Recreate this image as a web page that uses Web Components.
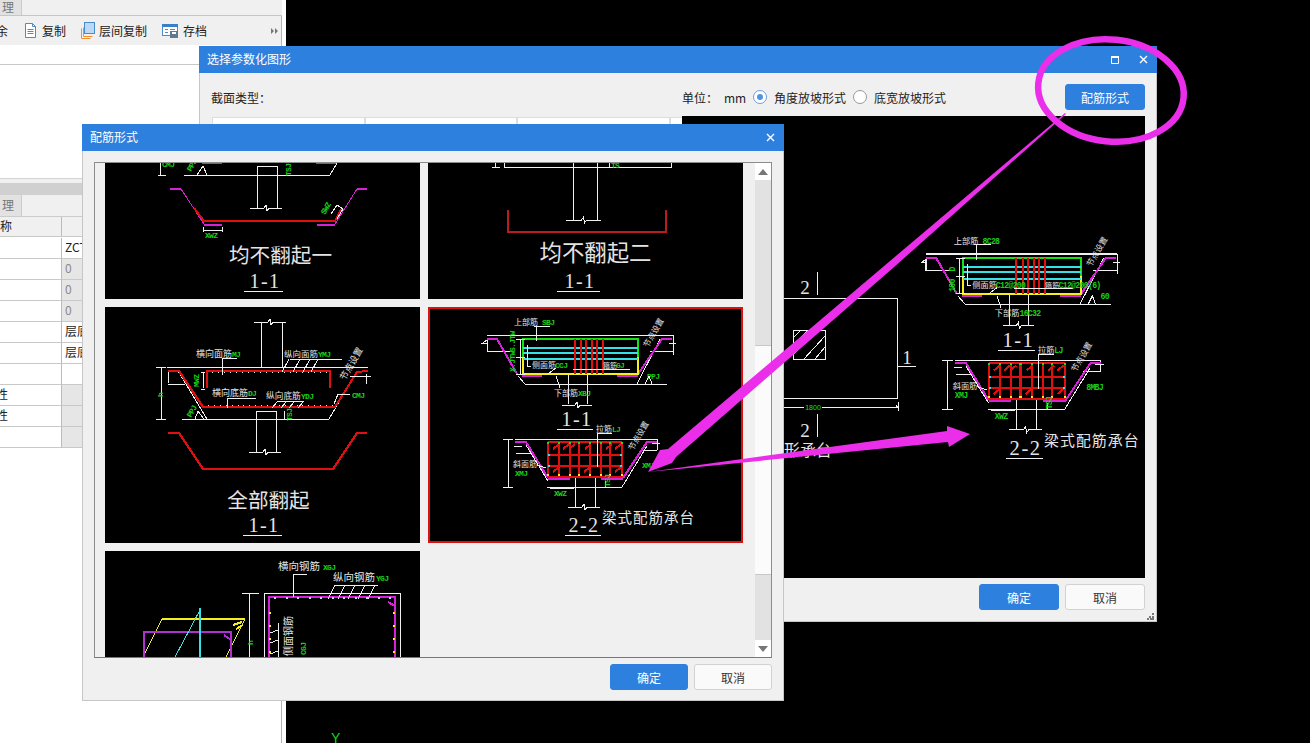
<!DOCTYPE html>
<html lang="zh-CN">
<head>
<meta charset="utf-8">
<title>配筋形式</title>
<style>
  html, body { margin: 0; background: #000; overflow: hidden; }
  body { font: 12px "Noto Sans CJK SC", "Noto Sans", sans-serif; }
</style>
</head>
<body>

<cad-desktop>
  <app-panel></app-panel>

  <app-window title="选择参数化图形" x="199" y="46" w="958" h="576" maximizable grip>
    <div style="display:flex;flex-direction:column;height:100%;padding:0 12px;box-sizing:border-box;color:#222">
      <div style="height:43px;display:flex;align-items:center;flex:none;padding-top:5px;box-sizing:border-box">
        <span style="width:471px;flex:none">截面类型：</span>
        <span style="width:42px;flex:none">单位：</span>
        <span style="width:29px;flex:none">mm</span>
        <ui-radio checked>角度放坡形式</ui-radio>
        <ui-radio>底宽放坡形式</ui-radio>
        <ui-button primary style="margin-left:auto;width:80px">配筋形式</ui-button>
      </div>
      <div style="flex:1;display:flex;min-height:0">
        <div style="width:471px;flex:none;display:flex;padding:1px 0 0 1px;box-sizing:border-box;height:20px">
          <i style="width:153px;height:30px;background:#fff;border:1px solid #ddd;box-sizing:border-box"></i>
          <i style="width:152px;height:30px;background:#fff;border:1px solid #ddd;box-sizing:border-box"></i>
          <i style="width:153px;height:30px;background:#fff;border:1px solid #ddd;box-sizing:border-box"></i>
          <i style="width:12px;height:30px;background:#fff;border:1px solid #ddd;border-right:0;box-sizing:border-box"></i>
        </div>
        <cad-thumb kind="view" style="width:463px;height:462px"></cad-thumb>
      </div>
      <div style="height:44px;display:flex;justify-content:flex-end;gap:6px;padding-top:6px;box-sizing:border-box;flex:none">
        <ui-button primary style="width:80px">确定</ui-button>
        <ui-button style="width:80px">取消</ui-button>
      </div>
    </div>
  </app-window>

  <app-window title="配筋形式" x="82" y="124" w="702" h="577">
    <div style="display:flex;flex-direction:column;height:100%;padding:11px 12px 0;box-sizing:border-box">
      <thumb-list>
        <cad-thumb kind="flat1"></cad-thumb>
        <cad-thumb kind="flat2"></cad-thumb>
        <cad-thumb kind="all"></cad-thumb>
        <cad-thumb kind="beam" selected></cad-thumb>
        <cad-thumb kind="wall"></cad-thumb>
      </thumb-list>
      <div style="height:43px;display:flex;justify-content:flex-end;gap:6px;padding-top:6px;box-sizing:border-box;flex:none">
        <ui-button primary>确定</ui-button>
        <ui-button>取消</ui-button>
      </div>
    </div>
  </app-window>

  <markup-overlay></markup-overlay>
</cad-desktop>

<script>
const RED = '#e01010', MAG = '#d422d4', WHITE = '#f0f0f0', LIME = '#14e014', CYAN = '#35e0e6', YEL = '#f4f020', TAG = '#18d018';
const PINK = '#ea2eea';
const CJK = '"Noto Sans CJK SC", sans-serif';

// svg helpers, coordinates are screen pixels of the reference
function line(pts, color = WHITE, w = 1) {
  return `<polyline points="${pts}" fill="none" stroke="${color}" stroke-width="${w}"/>`;
}
function text(x, y, s, opt = {}) {
  const { fill = '#e4e4e4', size = 8, rot = 0, anchor = 'start', font = CJK, spacing = 0, weight = 400 } = opt;
  const tf = rot ? ` transform="rotate(${rot} ${x} ${y})"` : '';
  return `<text x="${x}" y="${y}" fill="${fill}" font-size="${size}" font-family='${font}' font-weight="${weight}" text-anchor="${anchor}" letter-spacing="${spacing}"${tf}>${s}</text>`;
}
function tag(x, y, s, rot = 0) {
  return text(x, y, s, { fill: TAG, size: 8, rot, font: '"Liberation Mono", monospace', spacing: -0.7, weight: 700 });
}
function secTitle(cx, y, s, x1, x2) {
  return text(cx, y, s, { size: 20, anchor: 'middle', font: '"Liberation Serif", serif', spacing: 1.5 }) + line(`${x1},${y + 3} ${x2},${y + 3}`);
}
function breakLine(x1, x2, y) {
  const m = (x1 + x2) / 2;
  return line(`${x1},${y} ${m - 2},${y} ${m},${y - 3} ${m + 1},${y + 3} ${m + 3},${y} ${x2},${y}`);
}
function dots(list, color, r = 1) {
  return list.map(p => `<rect x="${p[0] - r}" y="${p[1] - r}" width="${2 * r}" height="${2 * r}" fill="${color}"/>`).join('');
}
function range(a, b, n) {
  return Array.from({ length: n }, (_, i) => Math.round(a + (b - a) * i / (n - 1)));
}

function flatOne() {
  return line('184,175 330,175') + line('257,175 257,166 277,166 277,175') + line('257,175 257,208') + line('277,175 277,208') +
    breakLine(250, 282, 208) + line('202,163 222,163', MAG, 2) + line('316,163 336,163', MAG, 2) +
    line('158,175 166,175') + line('160,163 160,175') +
    line('330,175 337,163') + line('197,175 203,166 207,175') +
    tag(162, 167, 'CMJ') + tag(191, 172, 'PPJ', -60) + tag(291, 176, 'TSJ', -90) +
    line('170,189 181,189', MAG, 2) + line('181,189 204,224', MAG) + line('204,225 222,225', MAG, 2) +
    line('317,225 335,225', MAG, 2) + line('335,224 357,189', MAG) + line('357,189 367,189', MAG, 2) +
    line('194,208 204,221 335,221 341,209', RED, 2) +
    line('203,227 203,232') + line('222,227 222,232') + line('203,230 222,230') + tag(205, 238, 'XWZ') +
    tag(325, 215, 'SWZ', -60) + line('331,214 337,205 343,209 337,219') +
    text(280.5, 263, '均不翻起一', { size: 20.6, anchor: 'middle' }) + secTitle(265, 288, '1-1', 244, 283);
}

function flatTwo() {
  return line('504,163 504,167 671,167 671,163') + line('573,163 573,220') + line('597,163 597,220') +
    line('495,163 495,168') + line('492,167 500,167') + line('609,163 609,167') + tag(611, 168, 'TS') +
    breakLine(566, 601, 220) + line('508,210 508,232 666,232 666,210', '#bb1d1d', 2) +
    text(595.5, 261, '均不翻起二', { size: 22.4, anchor: 'middle' }) + secTitle(580, 288, '1-1', 557, 600);
}

function allBent() {
  return line('261,367 261,322') + line('282,367 282,322') + breakLine(254, 286, 322) +
    line('167,367 368,367') + line('178,371 207,419') + line('182,419 329,419 357,371') +
    line('161,367 161,419') + line('156,367 166,367') + line('156,419 166,419') + tag(163, 397, 'h', -90) +
    line('168,371 179,371 203,407 335,407 357,372 368,371', RED, 2) +
    line('207,388 207,371 330,371 330,388', RED, 2) +
    dots(range(212, 326, 20).map(x => [x, 372]), WHITE, 0.5) + dots(range(208, 332, 22).map(x => [x, 405]), WHITE, 0.5) +
    line('203,373 203,388') + line('201,372 205,372') + line('201,389 205,389') + tag(199, 387, 'MWZ', -90) +
    line('168,372 168,383') + line('168,384 185,384') + line('366,374 366,384') + line('350,376 371,376') +
    line('168,433 179,433 203,469 333,469 357,433 367,433', RED, 2) +
    line('256,411 256,452') + line('276,411 276,452') + line('256,411 276,411') + breakLine(249, 281, 452) +
    text(196, 357, '横向面筋', { size: 9 }) + tag(232, 357, 'MJ') + line('222,358 237,358') + line('222,358 222,375') +
    text(284, 357, '纵向面筋', { size: 8.5 }) + tag(318, 357, 'YMJ') + line('290,359 342,359') + line('289,359 282,372') + line('300,359 293,372') + line('310,359 303,372') + line('318,359 311,372') +
    text(212, 396, '横向底筋', { size: 9 }) + tag(248, 396, 'DJ') + line('227,398 256,398') + line('227,398 227,408') +
    text(266, 399, '纵向底筋', { size: 8.7 }) + tag(301, 399, 'YDJ') + line('278,401 304,401') + line('278,401 272,408') + line('287,401 281,408') + line('295,401 289,408') + line('304,401 298,408') +
    tag(352, 398, 'CMJ') + line('338,394 350,394') + line('338,394 334,404') +
    text(345, 381, '节点设置', { size: 9, rot: -60 }) +
    tag(191, 418, 'PPJ', -60) + line('195,419 198,411 204,419') + tag(292, 421, 'TSJ', -90) + line('284,411 284,419') +
    text(268.5, 508, '全部翻起', { size: 20.6, anchor: 'middle' }) + secTitle(264, 532, '1-1', 243, 282);
}

// beam type section, used in the list and, scaled, in the preview
function beamSection(t) {
  const up = line('487,335 673,335') + line('497,339 517,374') + line('487,343 483,343 487,340 487,351 510,351') +
    line('660,339 637,384') + line('669,343 676,343') + line('673,335 673,355') + line('650,351 673,351') +
    line('525,384 667,384') + line('518,376 525,384') +
    line('487,339 497,339 517,374', MAG, 2) + line('638,374 662,339 672,339', MAG, 2) +
    line('522,376 542,376', MAG, 2) + line('617,376 638,376', MAG, 2) +
    line('523,357 523,339 638,339 638,357', LIME, 2) + line('523,357 523,374 638,374 638,357', YEL, 2) +
    [348, 353, 359].map(y => line(`523,${y} 638,${y}`, CYAN, 2)).join('') +
    [575, 581, 586, 592, 597, 603].map(x => line(`${x},339 ${x},374`, RED, 2)).join('') +
    line('568,375 568,404') + line('587,375 587,404') + breakLine(562, 592, 405) +
    line('520,339 520,374') + line('516,339 525,339') + line('516,357 525,357') + line('516,374 525,374') +
    line('527,345 527,366 531,366') + line('573,369 630,369') + line('556,368 548,374') +
    line('556,376 560,388') +
    line('534,326 550,326') + line('536,326 536,341') +
    text(514, 325, t.top) + tag(t.topX, 325, t.topTag) +
    text(532, 368, t.side) + tag(555, 368, t.sideTag) +
    text(603, 368, t.stir, { size: 7 }) + tag(616, 368, t.stirTag) +
    text(554, 396, t.bot) + tag(578, 396, t.botTag) +
    tag(t.angX, 379, t.ang) + line('645,384 649,376 652,384') +
    text(648, 348, '节点设置', { size: 8, rot: -60 }) +
    tag(515, 352, t.d1, -90) + tag(515, 372, t.d2, -90) +
    secTitle(577, 426, '1-1', 557, 593);

  const vx = [548, 559, 570, 579, 590, 601, 610, 622], hy = [442, 455, 466, 477];
  const low = line('515,439 657,439') + line('526,445 548,481') + line('547,487 622,487 647,446') +
    line('508,439 508,487') + line('503,439 513,439') + line('503,487 513,487') +
    line('514,446 522,446') + line('516,453 531,453') + line('652,443 660,443') + line('657,439 657,450') + line('640,450 657,450') +
    line('515,442 526,442 548,478', MAG, 2) + line('548,478 570,478', MAG, 3) + line('601,478 623,478', MAG, 3) + line('623,478 647,442 657,442', MAG, 2) +
    vx.map(x => line(`${x},442 ${x},477`, RED, 2)).join('') + hy.map(y => line(`548,${y} 622,${y}`, RED, 2)).join('') +
    [[553, 449], [563, 449], [569, 449], [585, 449], [606, 449], [615, 449], [553, 472], [615, 472], [584, 472]].map(p => line(`${p[0]},${p[1]} ${p[0] + 6},${p[1] - 5}`, RED, 2)).join('') +
    dots(vx.map(x => [x, 443]), LIME, 1) + dots(vx.map(x => [x, 475]), YEL, 1) +
    dots([[549, 455], [549, 466], [621, 455], [621, 466]], CYAN, 1) +
    line('575,478 575,507') + line('595,478 595,507') + breakLine(568, 600, 507) +
    line('597,433 612,433') + line('597,433 597,467') + text(596, 432, '拉筋') + tag(612, 432, 'LJ') +
    text(513, 467, '斜面筋') + line('537,465 546,468') + tag(515, 476, 'XMJ') +
    line('550,488 574,488') + tag(554, 496, 'XWZ') + tag(t.xmjX, 468, t.xmj) + line('605,481 605,487') + tag(610, 487, 'TSJ', -90) +
    text(633, 451, '节点设置', { size: 8, rot: -60 }) +
    secTitle(584, 532, '2-2', 565, 601) +
    text(602, 523, '梁式配筋承台', { size: 14.5, spacing: 1 });
  return up + low;
}

function wall() {
  return line('162,619 245,619', YEL, 2) + line('162,619 144,655', YEL) + line('245,619 226,657', YEL) +
    line('233,625 242,622', YEL, 2) + line('236,629 243,625', YEL, 2) +
    line('144,657 144,632 231,632 231,657', '#b030d0', 2) + line('224,635 231,640', '#b030d0', 2) +
    line('200,608 200,657', CYAN, 2) + line('200,610 175,657', CYAN) +
    line('242,593 259,593') + line('249,593 249,657') + tag(253, 645, 'h', -90) +
    line('264,657 264,593 400,593 400,657') +
    line('269,657 269,597 395,597 395,657', '#d820d8', 2) + line('388,602 395,606', MAG, 2) +
    dots(range(275, 390, 11).map(x => [x, 598]), '#9fe8ff', 1) + dots(range(613, 652, 4).map(y => [270, y]), YEL, 1) + dots(range(613, 652, 4).map(y => [394, y]), YEL, 1) +
    line('293,574 307,574') + line('293,574 293,597') +
    text(278, 570, '横向钢筋', { size: 10.5 }) + tag(323, 570, 'XGJ') +
    text(333, 581, '纵向钢筋', { size: 10.5 }) + tag(376, 581, 'YGJ') +
    line('335,585 378,585') + [335, 345, 355, 365, 375].map(x => line(`${x},585 ${x - 7},599`)).join('') +
    line('278,623 278,657') + [630, 640, 651].map(y => line(`270,${y + 3} 278,${y}`)).join('') +
    text(292, 656, '侧面钢筋', { size: 10, rot: -90 }) + tag(306, 655, 'CGJ', -90);
}

function plan() {
  const big = { size: 19, anchor: 'middle', font: '"Liberation Serif", serif' };
  return line('700,298 897,298 897,398 700,398') +
    line('793,330 825,330 825,359 793,359 793,330') +
    line('793,338 801,330') + line('793,345 808,330') + line('793,355 816,330') + line('804,359 825,336') + line('815,359 825,347') +
    line('817,272 817,295') + line('817,414 817,437') + line('898,366 916,366') +
    text(805, 294, '2', big) + text(805, 437, '2', big) + text(907, 364, '1', big) +
    line('700,407 804,407') + line('822,407 898,407') + line('896,405 899,409') + line('898,402 898,411') +
    text(813, 410, '1800', { fill: LIME, size: 7, anchor: 'middle', font: '"Liberation Sans", sans-serif' }) +
    text(768, 456, '矩形承台', { size: 16 });
}

const DRAWINGS = {
  flat1: { box: '105 63 315 236', draw: flatOne },
  flat2: { box: '428 63 315 236', draw: flatTwo },
  all: { box: '105 307 315 236', draw: allBent },
  beam: {
    box: '428 307 315 236',
    draw: () => beamSection({ top: '上部筋', topX: 542, topTag: 'SBJ', side: '侧面筋', sideTag: 'CCJ', stir: '箍筋', stirTag: 'GJ', bot: '下部筋', botTag: 'XBJ', ang: 'PPJ', angX: 647, d1: 'S.JTW', d2: 'X.JTW', xmj: 'XMJ', xmjX: 642 })
  },
  wall: { box: '105 551 315 236', draw: wall },
  view: {
    box: '682 116 463 462',
    draw: () => plan() + `<g transform="translate(926 254) scale(1.027 1.022) translate(-487 -335)">` +
      beamSection({ top: '上部筋', topX: 542, topTag: '8C28', side: '侧面筋', sideTag: 'C12@200', stir: '箍筋', stirTag: 'C12@200(6)', bot: '下部筋', botTag: '16C32', ang: '60', angX: 657, d1: 'D', d2: '100', xmj: '8MBJ', xmjX: 643 }) + `</g>`
  }
};

class CadDesktop extends HTMLElement {
  constructor() {
    super();
    this.attachShadow({ mode: 'open' });
    this.shadowRoot.innerHTML = `
      <style>
        :host { display: block; position: relative; width: 1310px; height: 743px; background: #000; overflow: hidden; }
        .axis { position: absolute; left: 331px; top: 730px; color: #14d814; font: 14px "Liberation Sans", sans-serif; }
      </style>
      <slot></slot>
      <span class="axis">Y</span>`;
  }
}

class AppPanel extends HTMLElement {
  constructor() {
    super();
    this.attachShadow({ mode: 'open' });
    const rows = [
      ['', 'ZCT', ''], ['', '0', 'g'], ['', '0', 'g'], ['', '0', 'g'], ['', '层底', ''],
      ['', '层底', ''], ['', '', ''], ['性', '', 'e'], ['性', '', 'e'], ['', '', 'e']
    ];
    this.shadowRoot.innerHTML = `
      <style>
        :host { display: flex; flex-direction: column; width: 282px; height: 743px; background: #fff; border-right: 4px solid #fff; box-shadow: inset -1px 0 #b4b4b4; color: #222; overflow: hidden; position: absolute; left: 0; top: 0; }
        .tabs { height: 15px; background: #f0f0f0; border-bottom: 1px solid #c6c6c6; flex: none; display: flex; }
        .tab { width: 22px; background: #e2e2e2; border-right: 1px solid #ccc; color: #777; padding-left: 2px; box-sizing: border-box; line-height: 13px; }
        .tools { height: 29px; background: #f0f0f0; flex: none; display: flex; align-items: center; margin-right: 1px; position: relative; }
        .tools span { display: inline-flex; align-items: center; gap: 5px; flex: none; }
        .tools svg { flex: none; display: block; }
        .more { position: absolute; right: 2px; top: 12px; }
        .blank { height: 19px; flex: none; border-bottom: 1px solid #c8c8c8; }
        .mid { height: 113px; flex: none; border-bottom: 1px solid #d4d4d4; }
        .gap { height: 4px; flex: none; background: #f0f0f0; }
        .bar { height: 12px; background: #d0d0d0; flex: none; }
        .tab2 { height: 22px; flex: none; box-sizing: border-box; background: #f0f0f0; border-bottom: 1px solid #ccc; display: flex; }
        .tab2 .tab { line-height: 19px; }
        .grid { display: grid; grid-template-columns: 61px 1fr; grid-auto-rows: 21px; flex: none; }
        .grid > div { box-sizing: border-box; border-bottom: 1px solid #c9c9c9; line-height: 18px; white-space: nowrap; overflow: hidden; }
        .grid > div:nth-child(even) { border-left: 1px solid #bbb; padding-left: 3px; }
        .head { background: #f0f0f0; height: 20px; }
        .g { background: #e6e6e6; color: #8a8a8a; }
        .e { background: #e6e6e6; }
        .strip { margin-left: -4px; }
      </style>
      <div class="tabs"><div class="tab">理</div></div>
      <div class="tools">
        <span class="strip" style="width:28px">余</span>
        <span style="width:57px">
          <svg width="13" height="15" viewBox="0 0 13 15"><path d="M1.500.5h7l3 3v11h-10z" fill="#fff" stroke="#4a8cc8"/><path d="M8.500.5v3h3M3.500 6.500h6M3.500 8.500h6M3.500 10.500h6" fill="none" stroke="#4a8cc8"/></svg>复制</span>
        <span style="width:81px;gap:4px">
          <svg width="14" height="17" viewBox="0 0 14 17"><path d="M.5 6.500v10h9" fill="none" stroke="#f09030"/><path d="M2.500 5.500v9h9" fill="none" stroke="#f09030"/><rect x="3.500" y=".5" width="10" height="11" fill="#bcd8f5" stroke="#4a8cc8"/></svg>层间复制</span>
        <span>
          <svg width="16" height="15" viewBox="0 0 16 15"><rect x=".5" y="1.500" width="15" height="11" fill="#fff" stroke="#4a8cc8"/><rect x="0" y="1" width="16" height="3" fill="#3a80c8"/><path d="M3 6.500h3M3 9.500h3M8 6.500h5" stroke="#4a8cc8"/><rect x="8" y="8" width="8" height="7" fill="#607890"/><rect x="10" y="9" width="4" height="2" fill="#fff"/></svg>存档</span>
        <svg class="more" width="8" height="6"><path d="M0 0l3 3-3 3zM4 0l3 3-3 3z" fill="#777"/></svg>
      </div>
      <div class="blank"></div>
      <div class="mid"></div>
      <div class="gap"></div>
      <div class="bar"></div>
      <div class="tab2"><div class="tab">理</div></div>
      <div class="grid">
        <div class="head">称</div><div class="head"></div>
        ${rows.map(r => `<div><span class="strip">${r[0]}</span></div><div class="${r[2]}">${r[1]}</div>`).join('')}
      </div>`;
  }
}

class AppWindow extends HTMLElement {
  connectedCallback() {
    if (this.shadowRoot) return;
    const a = n => this.getAttribute(n);
    this.attachShadow({ mode: 'open' });
    this.shadowRoot.innerHTML = `
      <style>
        :host { position: absolute; left: ${a('x')}px; top: ${a('y')}px; width: ${a('w')}px; height: ${a('h')}px;
          display: flex; flex-direction: column; background: #f0f0f0; box-shadow: inset 0 0 0 1px #c6c6c6; color: #222; }
        .bar { height: 27px; flex: none; box-sizing: border-box; background: #2e80df; color: #fff; display: flex; align-items: center; padding: 0 8px 2px; }
        .t { flex: 1; }
        .ctl { display: flex; gap: 19px; align-items: center; margin: 2px 1px 0 0; }
        svg { display: block; }
        .body { flex: 1; min-height: 0; }
        .grip { position: absolute; right: 2px; bottom: 2px; }
      </style>
      <div class="bar">
        <div class="t">${a('title')}</div>
        <div class="ctl">
          ${this.hasAttribute('maximizable') ? '<svg width="9" height="8"><path d="M.5 1.500h7v6h-7z" fill="none" stroke="#fff"/><path d="M0 1h8" stroke="#fff" stroke-width="2"/></svg>' : ''}
          <svg width="9" height="9"><path d="M1 1l7 7M8 1l-7 7" stroke="#fff" stroke-width="1.400"/></svg>
        </div>
      </div>
      <div class="body"><slot></slot></div>
      ${this.hasAttribute('grip') ? '<svg class="grip" width="8" height="8"><path d="M5 1h2v2h-2zM2 4h2v2h-2zM5 4h2v2h-2zM0 6h2v2h-2zM3 6h2v2h-2zM5 6h2v2h-2z" fill="#777"/></svg>' : ''}`;
  }
}

class UiButton extends HTMLElement {
  constructor() {
    super();
    this.attachShadow({ mode: 'open' });
    this.shadowRoot.innerHTML = `
      <style>
        :host { display: flex; flex: none; align-items: center; justify-content: center; width: 78px; height: 26px; box-sizing: border-box;
          border-radius: 3px; background: #fafafa; border: 1px solid #d2d2d2; color: #333; font-size: 12px; }
        :host([primary]) { background: #2e80df; border-color: #2e80df; color: #fff; }
      </style>
      <slot></slot>`;
  }
}

class UiRadio extends HTMLElement {
  constructor() {
    super();
    this.attachShadow({ mode: 'open' });
    this.shadowRoot.innerHTML = `
      <style>
        :host { display: flex; align-items: center; gap: 7px; width: 100px; flex: none; }
        i { width: 14px; height: 14px; border-radius: 50%; border: 1px solid #9a9a9a; background: #fff; box-sizing: border-box; display: block; position: relative; }
        :host([checked]) i { border-color: #6e9ed8; }
        :host([checked]) i::after { content: ""; position: absolute; inset: 3px; border-radius: 50%; background: #4f94e2; }
      </style>
      <i></i><slot></slot>`;
  }
}

class ThumbList extends HTMLElement {
  constructor() {
    super();
    this.attachShadow({ mode: 'open' });
    this.shadowRoot.innerHTML = `
      <style>
        :host { display: flex; height: 496px; flex: none; box-sizing: border-box; border: 1px solid #8c8c8c; border-bottom-color: #777; background: #f0f0f0; overflow: hidden; }
        .pane { width: 660px; flex: none; overflow: hidden; }
        .grid { display: grid; grid-template-columns: 315px 315px; grid-auto-rows: 236px; gap: 8px; padding-left: 10px; margin-top: -100px; }
        .bar { width: 16px; flex: none; display: flex; flex-direction: column; background: #e2e2e2; }
        .btn { height: 17px; flex: none; background: #fff; display: flex; align-items: center; justify-content: center; }
        .btn i { width: 0; height: 0; border: 5px solid transparent; }
        .up i { border-bottom: 6px solid #777; border-top-width: 0; }
        .down i { border-top: 6px solid #777; border-bottom-width: 0; }
        .sp1 { height: 165px; flex: none; }
        .thumb { height: 230px; flex: none; background: #fbfbfb; border-top: 1px solid #c8c8c8; border-bottom: 1px solid #c8c8c8; box-sizing: border-box; }
        .sp2 { flex: 1; }
      </style>
      <div class="pane"><div class="grid"><slot></slot></div></div>
      <div class="bar">
        <div class="btn up"><i></i></div><div class="sp1"></div><div class="thumb"></div><div class="sp2"></div><div class="btn down"><i></i></div>
      </div>`;
  }
}

class CadThumb extends HTMLElement {
  connectedCallback() {
    if (this.shadowRoot) return;
    const d = DRAWINGS[this.getAttribute('kind')];
    const [, , w, h] = d.box.split(' ');
    this.attachShadow({ mode: 'open' });
    this.shadowRoot.innerHTML = `
      <style>
        :host { display: block; background: #000; position: relative; flex: none; }
        :host([selected]) { outline: 2px solid #e01010; outline-offset: -2px; }
        svg { display: block; width: 100%; height: 100%; }
      </style>
      <svg viewBox="${d.box}" width="${w}" height="${h}" shape-rendering="crispEdges">${d.draw()}</svg>`;
  }
}

class MarkupOverlay extends HTMLElement {
  constructor() {
    super();
    this.attachShadow({ mode: 'open' });
    this.shadowRoot.innerHTML = `
      <style>
        :host { position: absolute; inset: 0; pointer-events: none; }
        svg { display: block; }
      </style>
      <svg width="1310" height="743">
        <ellipse cx="1111" cy="90.500" rx="73" ry="51" transform="rotate(6 1111 90)" fill="none" stroke="${PINK}" stroke-width="6.500"/>
        <path d="M648 472L660 450L668 449L890 261L1065 113L1066 114L893 268L676 457L672 463Z" fill="${PINK}"/>
        <path d="M648 472L947 431L947 426L970 434L949 447L948 442Z" fill="${PINK}"/>
      </svg>`;
  }
}

customElements.define('cad-desktop', CadDesktop);
customElements.define('app-panel', AppPanel);
customElements.define('app-window', AppWindow);
customElements.define('ui-button', UiButton);
customElements.define('ui-radio', UiRadio);
customElements.define('thumb-list', ThumbList);
customElements.define('cad-thumb', CadThumb);
customElements.define('markup-overlay', MarkupOverlay);
</script>
</body>
</html>
